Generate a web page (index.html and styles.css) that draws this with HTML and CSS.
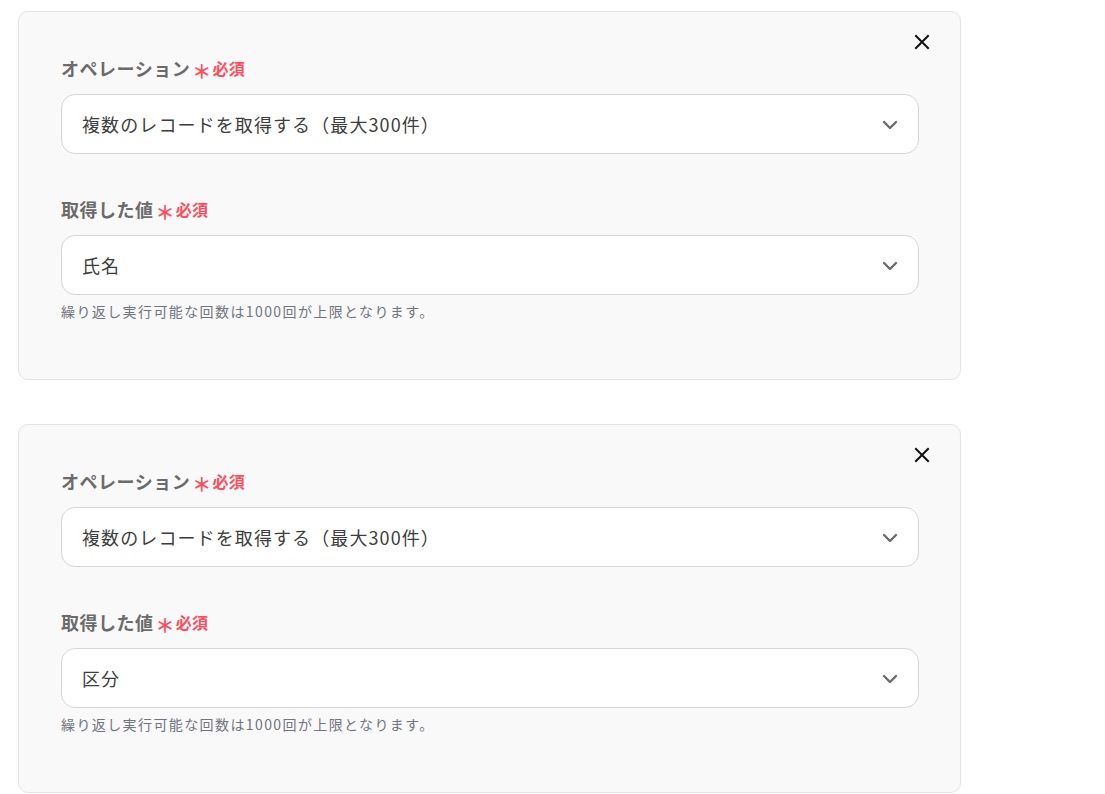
FILE: index.html
```html
<!DOCTYPE html>
<html lang="ja">
<head>
<meta charset="utf-8">
<link rel="stylesheet" href="styles.css">
</head>
<body>
<div class="page">
  <section class="card">
    <button class="close" aria-label="閉じる">
      <svg width="16" height="16" viewBox="0 0 16 16"><path d="M2 2L14 14M14 2L2 14" stroke="#111" stroke-width="2" stroke-linecap="square" fill="none"/></svg>
    </button>
    <div class="field">
      <label class="label">オペレーション<span class="req"><span class="ast">＊</span>必須</span></label>
      <div class="select"><span class="value">複数のレコードを取得する（最大300件）</span>
        <svg class="chev" width="16" height="10" viewBox="0 0 16 10"><path d="M2 2L8 8L14 2" stroke="#6b6b6b" stroke-width="2.4" fill="none" stroke-linecap="round" stroke-linejoin="round"/></svg>
      </div>
    </div>
    <div class="field second">
      <label class="label">取得した値<span class="req"><span class="ast">＊</span>必須</span></label>
      <div class="select"><span class="value">氏名</span>
        <svg class="chev" width="16" height="10" viewBox="0 0 16 10"><path d="M2 2L8 8L14 2" stroke="#6b6b6b" stroke-width="2.4" fill="none" stroke-linecap="round" stroke-linejoin="round"/></svg>
      </div>
      <p class="hint">繰り返し実行可能な回数は1000回が上限となります。</p>
    </div>
  </section>
  <section class="card">
    <button class="close" aria-label="閉じる">
      <svg width="16" height="16" viewBox="0 0 16 16"><path d="M2 2L14 14M14 2L2 14" stroke="#111" stroke-width="2" stroke-linecap="square" fill="none"/></svg>
    </button>
    <div class="field">
      <label class="label">オペレーション<span class="req"><span class="ast">＊</span>必須</span></label>
      <div class="select"><span class="value">複数のレコードを取得する（最大300件）</span>
        <svg class="chev" width="16" height="10" viewBox="0 0 16 10"><path d="M2 2L8 8L14 2" stroke="#6b6b6b" stroke-width="2.4" fill="none" stroke-linecap="round" stroke-linejoin="round"/></svg>
      </div>
    </div>
    <div class="field second">
      <label class="label">取得した値<span class="req"><span class="ast">＊</span>必須</span></label>
      <div class="select"><span class="value">区分</span>
        <svg class="chev" width="16" height="10" viewBox="0 0 16 10"><path d="M2 2L8 8L14 2" stroke="#6b6b6b" stroke-width="2.4" fill="none" stroke-linecap="round" stroke-linejoin="round"/></svg>
      </div>
      <p class="hint">繰り返し実行可能な回数は1000回が上限となります。</p>
    </div>
  </section>
</div>
</body>
</html>
```

FILE: styles.css
```css
* { box-sizing: border-box; }
html, body { margin: 0; padding: 0; background: #fff; }
body {
  font-family: "Noto Sans CJK JP", "Noto Sans", sans-serif;
  color: #333;
}
.page {
  padding: 11px 0 0 18px;
  display: flex;
  flex-direction: column;
  gap: 44px;
  width: 961px;
}
.card {
  position: relative;
  width: 943px;
  height: 369px;
  background: #f9f9f9;
  border: 1px solid #e3e3e3;
  border-radius: 10px;
  padding: 44px 41px 0 42px;
}
.close {
  position: absolute;
  top: 21px;
  right: 29px;
  width: 18px;
  height: 18px;
  padding: 0;
  border: 0;
  background: none;
  display: flex;
  align-items: center;
  justify-content: center;
}
.field { display: flex; flex-direction: column; }
.field.second { margin-top: 43px; }
.label {
  display: flex;
  align-items: center;
  height: 24px;
  font-size: 18px;
  font-weight: 700;
  letter-spacing: 0.5px;
  color: #6b6b6b;
  margin-bottom: 14px;
}
.req {
  display: inline-flex;
  align-items: center;
  color: #ff4d5e;
  font-size: 16px;
  font-weight: 700;
  letter-spacing: 0.3px;
  margin-left: 2px;
}
.ast { font-size: 19px; margin-right: 1px; position: relative; top: 2px; }
.select {
  height: 60px;
  background: #fff;
  border: 1px solid #d4d6db;
  border-radius: 14px;
  display: flex;
  align-items: center;
  justify-content: space-between;
  padding: 0 20px 0 20px;
}
.value {
  font-size: 18px;
  letter-spacing: 1.1px;
  color: #3d3d3d;
}
.chev { margin-top: 1px; }
.hint {
  margin: 6px 0 0;
  font-size: 14px;
  letter-spacing: 1.4px;
  line-height: 20px;
  color: #707580;
}
```
